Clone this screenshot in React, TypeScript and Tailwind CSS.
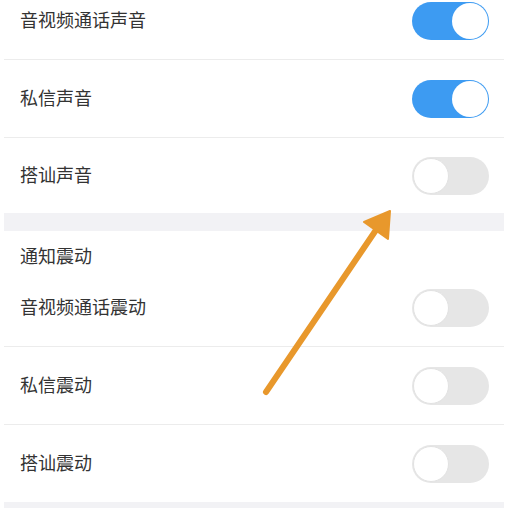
import React from "react";

type Item = { label: string; on: boolean };

const soundItems: Item[] = [
  { label: "音视频通话声音", on: true },
  { label: "私信声音", on: true },
  { label: "搭讪声音", on: false },
];

const vibrateItems: Item[] = [
  { label: "音视频通话震动", on: false },
  { label: "私信震动", on: false },
  { label: "搭讪震动", on: false },
];

function Toggle({ on }: { on: boolean }) {
  return (
    <div
      className={
        on
          ? "relative h-[38px] w-[77px] rounded-full bg-[#3d9bf2]"
          : "relative h-[38px] w-[77px] rounded-full bg-[#e6e6e6]"
      }
    >
      <div
        className={
          on
            ? "absolute right-[1px] top-[1px] h-[36px] w-[36px] rounded-full bg-white"
            : "absolute left-[1px] top-[1px] h-[36px] w-[36px] rounded-full border border-[#e2e2e2] bg-white"
        }
      />
    </div>
  );
}

function Row({ item, last, height }: { item: Item; last?: boolean; height: string }) {
  return (
    <>
      <div className={`flex items-center justify-between pl-[16px] pr-[15px] ${height}`}>
        <span className="mb-[4px] text-[18px] leading-[24px] text-[#333333]">{item.label}</span>
        <Toggle on={item.on} />
      </div>
      {!last && <div className="h-px bg-[#ececec]" />}
    </>
  );
}

export default function App() {
  return (
    <div
      className="relative h-[508px] w-[508px] overflow-hidden bg-white"
      style={{ fontFamily: '"Noto Sans CJK SC", "Noto Sans", sans-serif' }}
    >
      <div className="mx-[4px] -mt-[18px] flex flex-col">
        {soundItems.map((it, i) => (
          <Row
            key={it.label}
            item={it}
            last={i === soundItems.length - 1}
            height={i === soundItems.length - 1 ? "h-[75px]" : "h-[77px]"}
          />
        ))}
        <div className="h-[18px] bg-[#f2f2f5]" />
        <div className="flex h-[38px] items-end pb-[2px] pl-[16px]">
          <span className="text-[18px] leading-[24px] text-[#333333]">通知震动</span>
        </div>
        {vibrateItems.map((it, i) => (
          <Row key={it.label} item={it} last={i === vibrateItems.length - 1} height="h-[77px]" />
        ))}
        <div className="h-[20px] bg-[#f2f2f5]" />
      </div>

      {/* pointer arrow overlay */}
      <svg className="pointer-events-none absolute left-0 top-0" width="508" height="508" viewBox="0 0 508 508">
        <line x1="266" y1="392" x2="376" y2="230" stroke="#e8982c" strokeWidth="6" strokeLinecap="round" />
        <polygon points="390,211 364,222 388,239" fill="#e8982c" stroke="#e8982c" strokeWidth="2" strokeLinejoin="round" />
      </svg>
    </div>
  );
}
